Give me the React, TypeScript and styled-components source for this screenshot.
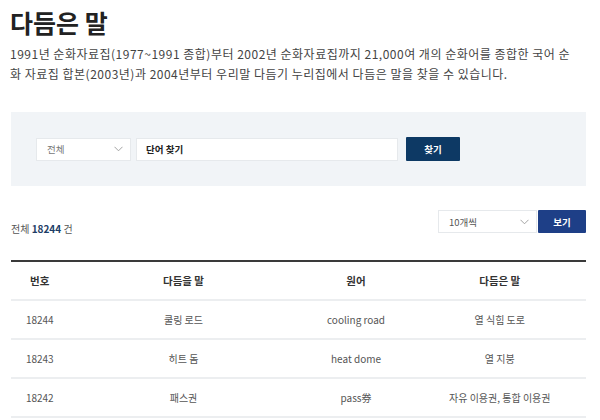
import * as React from "react"
import styled, { createGlobalStyle } from "styled-components"

const GlobalStyle = createGlobalStyle`
  body {
    margin: 0;
    background: #fff;
    font-family: "Noto Sans CJK KR", "Noto Sans", sans-serif;
    color: #333;
  }
`

interface IWord {
  no: number
  before: string
  origin: string
  after: string
}

const words: IWord[] = [
  { no: 18244, before: "쿨링 로드", origin: "cooling road", after: "열 식힘 도로" },
  { no: 18243, before: "히트 돔", origin: "heat dome", after: "열 지붕" },
  { no: 18242, before: "패스권", origin: "pass券", after: "자유 이용권, 통합 이용권" }
]

const Chevron = () => (
  <svg width="9" height="6" viewBox="0 0 9 6">
    <path d="M0.5 0.8 L4.5 4.8 L8.5 0.8" fill="none" stroke="#999" strokeWidth="0.9" />
  </svg>
)

export default () => (
  <Page>
    <GlobalStyle />
    <Title>다듬은 말</Title>
    <Intro>
      1991년 순화자료집(1977~1991 종합)부터 2002년 순화자료집까지 21,000여 개의 순화어를 종합한 국어 순
      <br />
      화 자료집 합본(2003년)과 2004년부터 우리말 다듬기 누리집에서 다듬은 말을 찾을 수 있습니다.
    </Intro>
    <SearchPanel>
      <Select width={95}>
        <SelectText>전체</SelectText>
        <Chevron />
      </Select>
      <SearchInput>단어 찾기</SearchInput>
      <Button tone="#0d3964" width={54} height={24}>찾기</Button>
    </SearchPanel>
    <ListBar>
      <Total>
        전체 <strong>18244</strong> 건
      </Total>
      <Controls>
        <Select width={99}>
          <SelectText dark>10개씩</SelectText>
          <Chevron />
        </Select>
        <Button tone="#1e3f87" width={48} height={23}>보기</Button>
      </Controls>
    </ListBar>
    <Table>
      <colgroup>
        <col style={{ width: "10%" }} />
        <col style={{ width: "40%" }} />
        <col style={{ width: "20%" }} />
        <col style={{ width: "30%" }} />
      </colgroup>
      <thead>
        <tr>
          <Th>번호</Th>
          <Th>다듬을 말</Th>
          <Th>원어</Th>
          <Th>다듬은 말</Th>
        </tr>
      </thead>
      <tbody>
        {words.map(w => (
          <tr key={w.no}>
            <Td>{w.no}</Td>
            <Td>{w.before}</Td>
            <Td>{w.origin}</Td>
            <Td>{w.after}</Td>
          </tr>
        ))}
      </tbody>
    </Table>
  </Page>
)

const Page = styled.div`
  width: 575px;
  padding: 0 0 0 11px;
`

const Title = styled.h1`
  margin: 5px 0 0 -1px;
  font-size: 25px;
  line-height: 34px;
  font-weight: 700;
  color: #222;
`

const Intro = styled.p`
  margin: 5px 0 0 -1px;
  width: 585px;
  white-space: nowrap;
  font-size: 12px;
  line-height: 20px;
  letter-spacing: 0.5px;
  color: #444;
`

const SearchPanel = styled.div`
  margin-top: 28px;
  height: 74px;
  background: #f1f4f7;
  display: flex;
  align-items: center;
  gap: 5px;
  padding-left: 25px;
`

const Select = styled.div<{ width: number }>`
  width: ${p => p.width}px;
  height: 23px;
  box-sizing: border-box;
  background: #fff;
  border: 1px solid #e6e9ec;
  display: flex;
  align-items: center;
  justify-content: space-between;
  padding: 0 7px 0 10px;
`

const SelectText = styled.span<{ dark?: boolean }>`
  font-size: 9.5px;
  color: ${p => (p.dark ? "#555" : "#777")};
`

const SearchInput = styled.div`
  width: 262px;
  height: 23px;
  box-sizing: border-box;
  background: #fff;
  border: 1px solid #e6e9ec;
  display: flex;
  align-items: center;
  padding-left: 9px;
  font-size: 9.5px;
  font-weight: 700;
  color: #222;
`

const Button = styled.div<{ tone: string; width: number; height: number }>`
  width: ${p => p.width}px;
  height: ${p => p.height}px;
  margin-left: 3px;
  background: ${p => p.tone};
  border-radius: 1px;
  color: #fff;
  font-size: 9.5px;
  font-weight: 700;
  display: flex;
  align-items: center;
  justify-content: center;
`

const ListBar = styled.div`
  margin-top: 24px;
  display: flex;
  justify-content: space-between;
  align-items: flex-start;
`

const Total = styled.div`
  margin-top: 11px;
  font-size: 10px;
  color: #555;

  strong {
    color: #1d3d66;
    font-weight: 700;
  }
`

const Controls = styled.div`
  display: flex;
  gap: 1px;

  ${Button} {
    margin-left: 0;
  }
`

const Table = styled.table`
  margin-top: 24px;
  width: 575px;
  border-collapse: collapse;
  table-layout: fixed;
  border-top: 2px solid #3a3a3a;
`

const Th = styled.th`
  height: 37px;
  font-size: 10.5px;
  font-weight: 700;
  color: #333;
  text-align: center;
  border-bottom: 2px solid #eceef0;
  padding: 0;
`

const Td = styled.td`
  height: 37px;
  font-size: 10px;
  color: #555;
  text-align: center;
  border-bottom: 2px solid #eceef0;
  padding: 0;
`
